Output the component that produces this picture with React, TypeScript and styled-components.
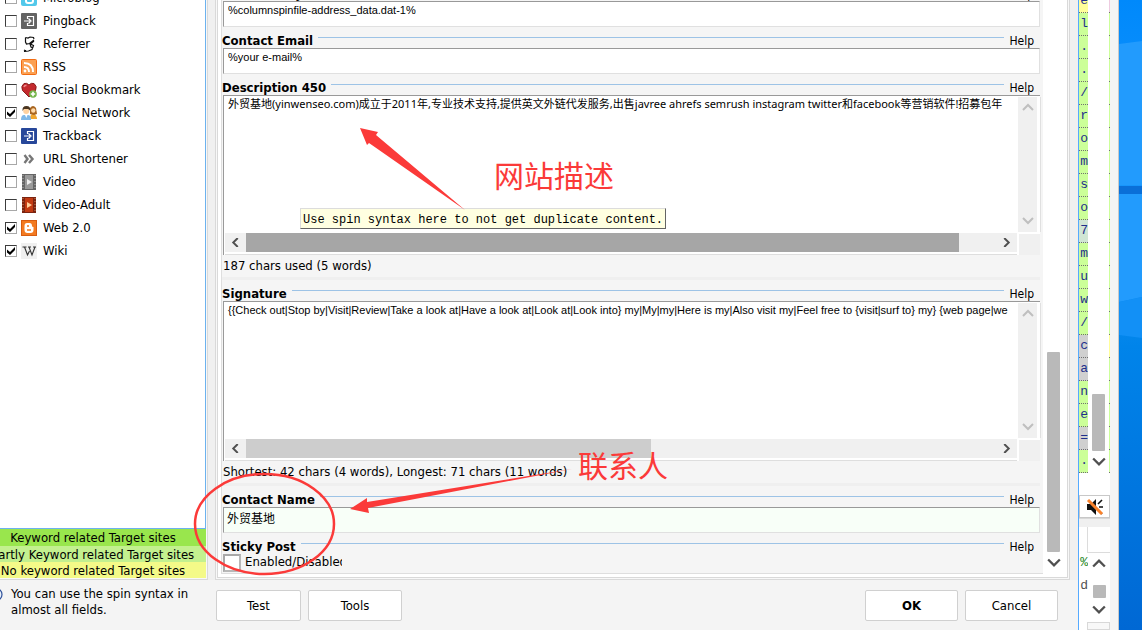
import React from "react";
import styled, { createGlobalStyle } from "styled-components";

const ui = `"DejaVu Sans Condensed", "Noto Sans", "Noto Sans CJK SC", sans-serif`;
const latinField = `"Liberation Sans", "Noto Sans CJK SC", sans-serif`;
const mixedField = `"Noto Sans", "Noto Sans CJK SC", sans-serif`;
const red = "#fb3a39";

const Global = createGlobalStyle`
  *, *::before, *::after { box-sizing: border-box; }
  body { margin: 0; background: #f4f4f4; color: #000; font: 13px/16px ${ui}; overflow: hidden; }
  input, textarea, button { font: inherit; color: inherit; margin: 0; }
`;

const Screen = styled.div`
  position: relative;
  display: flex;
  height: 100vh;
  min-height: 600px;
  overflow: hidden;
`;
const DialogWindow = styled.main`
  flex: 1;
  min-width: 0;
  display: flex;
  flex-direction: column;
  border-right: 1px solid #55aaff;
`;
const Workspace = styled.div`
  flex: 1;
  min-height: 0;
  display: flex;
  gap: 7px;
  background: #f0f0f0;
`;

/* Sidebar */
const Sidebar = styled.aside`
  width: 208px;
  flex: none;
  display: flex;
  flex-direction: column;
  background: #f8f8f8;
  border: solid #d9d9d9;
  border-width: 0 1px 1px 0;
  padding: 0 1px 1px 0;
`;
const SiteList = styled.ul`
  flex: 1;
  min-height: 0;
  margin: 0;
  padding: 0;
  list-style: none;
  overflow: hidden;
  background: #fff;
  border: solid #6cb2ee;
  border-width: 0 1px 1px 0;
`;
const SiteItem = styled.li`
  height: 23px;
  &:first-child { margin-top: -14px; }
`;
const SiteLabel = styled.label`
  display: flex;
  align-items: center;
  height: 23px;
  padding-left: 5px;
  svg { margin: 0 6px 0 4px; flex: none; }
`;
const Tick = styled.input<{ $large?: boolean }>`
  appearance: none;
  flex: none;
  width: ${(p) => (p.$large ? 18 : 12)}px;
  height: ${(p) => (p.$large ? 18 : 12)}px;
  background: #fff;
  border: ${(p) => (p.$large ? "2px" : "1px")} solid;
  border-color: ${(p) => (p.$large ? "#a8a8a8 #b8b8b8 #b8b8b8 #a8a8a8" : "#3c3c3c #a8a8a8 #a8a8a8 #3c3c3c")};
  &:checked::before {
    content: "";
    display: block;
    width: 10px;
    height: 10px;
    background: #000;
    clip-path: polygon(10% 40%, 40% 65%, 90% 15%, 90% 45%, 40% 95%, 10% 70%);
  }
`;
const Legend = styled.div<{ $tone: string }>`
  display: flex;
  justify-content: center;
  height: 16px;
  line-height: 17px;
  padding-right: 20px;
  white-space: nowrap;
  overflow: hidden;
  background: ${(p) => p.$tone};
  &:first-of-type { height: 17px; }
`;

/* Options panel */
const Panel = styled.section`
  flex: 1;
  min-width: 0;
  margin-right: 8px;
  padding: 0 1px 1px;
  background: #f8f8f8;
  border: solid #d9d9d9;
  border-width: 0 1px 1px;
`;
const PanelInner = styled.div`
  display: flex;
  height: 100%;
  padding: 0 0 3px 3px;
  background: #fff;
  border: solid #d9d9d9;
  border-width: 0 1px 1px;
`;
const Form = styled.form`
  flex: 1;
  min-width: 0;
  display: flex;
  flex-direction: column;
  justify-content: flex-end;
  overflow: hidden;
  padding-right: 3px;
  background: #f5f5f5;
  border: solid #dedede;
  border-width: 0 0 1px 1px;
  > * { flex: none; }
`;
const GroupHead = styled.div`
  display: flex;
  align-items: center;
  height: 21px;
  padding: 6px 6px 0 0;
  gap: 5px;
  &::before { content: ""; order: 1; flex: 1; height: 1px; margin-bottom: 6px; background: #9dc3e6; }
`;
const GroupTitle = styled.label`
  font-weight: bold;
  font-size: 13px;
`;
const HelpLink = styled.a`
  order: 2;
  color: #000;
  font-size: 12px;
  text-decoration: none;
`;
const TextInput = styled.input<{ $active?: boolean }>`
  display: block;
  width: 100%;
  height: 26px;
  padding: ${(p) => (p.$active ? "0 3px 6px" : "0 4px 8px")};
  font: ${(p) => (p.$active ? 12 : 11)}px/16px ${latinField};
  outline: 0;
  border: 1px solid;
  border-color: #999 #e0e0e0 #e0e0e0 #999;
  border-radius: 0;
  margin-left: 1px;
  max-width: calc(100% - 1px);
  background: ${(p) => (p.$active ? "#f8fff8" : "#fff")};
`;
const MemoBox = styled.div`
  display: grid;
  grid-template: 136px 23px / 1fr 22px;
  height: 160px;
  margin-left: 1px;
  background: #fff;
  border: solid #999;
  border-width: 1px 0 0 1px;
`;
const Memo = styled.textarea<{ $font: string }>`
  display: block;
  width: 100%;
  height: 100%;
  padding: 0 0 0 4px;
  border: 0;
  outline: 0;
  resize: none;
  overflow: hidden;
  white-space: pre;
  background: #fff;
  font: 11px/16px ${(p) => p.$font};
`;
const MemoView = styled.div`
  padding-right: 3px;
  min-width: 0;
`;
const VBar = styled.div`
  display: flex;
  flex-direction: column;
  justify-content: space-between;
  align-items: center;
  margin: 1px 3px 0 0;
  padding: 4px 0 5px;
  background: #f0f0f0;
  box-shadow: 3px 0 #fff, 4px 0 #e0e0e0;
`;
const HBar = styled.div`
  display: flex;
  align-items: center;
  margin: 1px 1px 3px;
  background: #f0f0f0;
  box-shadow: 0 2px #fff, 0 3px #dedede;
  svg { flex: none; margin: 0 6px; }
`;
const HTrack = styled.div`
  flex: 1;
  height: 100%;
`;
const HThumb = styled.div<{ $tone: string }>`
  height: 100%;
  background: ${(p) => p.$tone};
`;
const Corner = styled.div`
  background: #f0f0f0;
  margin: 2px 0 0 1px;
`;
const Stats = styled.p`
  margin: 0;
  height: 25px;
  padding: 3px 0 0 1px;
  border-bottom: 3px solid #efefef;
`;
const StickyRow = styled.label`
  display: flex;
  align-items: flex-start;
  gap: 4px;
  height: 19px;
  width: 120px;
  padding-left: 1px;
  overflow: hidden;
`;
const PanelScroll = styled.div`
  flex: none;
  width: 24px;
  display: flex;
  flex-direction: column;
  align-items: center;
  justify-content: flex-end;
  gap: 4px;
  padding: 0 3px 4px 0;
`;
const Thumb = styled.div<{ $h: number }>`
  width: 13px;
  height: ${(p) => p.$h}px;
  border-radius: 1px;
  background: #b9b9b9;
`;

/* Footer */
const Footer = styled.footer`
  flex: none;
  display: flex;
  height: 50px;
  padding-right: 20px;
  background: #f4f4f4;
`;
const Tip = styled.div`
  display: flex;
  gap: 8px;
  width: 216px;
  padding-top: 6px;
  p { margin: 0; }
  svg { display: block; flex: none; margin-top: 2px; }
`;
const ButtonRow = styled.div`
  flex: 1;
  display: flex;
  gap: 7px;
  padding-top: 10px;
`;
const PushButton = styled.button<{ $width: number; $main?: boolean }>`
  width: ${(p) => p.$width}px;
  height: 31px;
  padding: 0;
  background: #fff;
  border: 1px solid #d0d0d0;
  border-radius: 2px;
  font-weight: ${(p) => (p.$main ? "bold" : "normal")};
  margin-left: ${(p) => (p.$main ? "auto" : "0")};
`;

/* Window behind the dialog */
const BackWindow = styled.div`
  flex: none;
  width: 40px;
  display: flex;
  background: #f4f4f4;
  border-right: 1px solid #c8c8c8;
`;
const BackContent = styled.div`
  width: 31px;
  display: flex;
  flex-direction: column;
  background: #fff;
`;
const CodeArea = styled.div`
  display: flex;
  flex: none;
  height: 473px;
  overflow: hidden;
`;
const CodeColumn = styled.div<{ $width: number }>`
  width: ${(p) => p.$width}px;
  overflow: hidden;
`;
const CodeCell = styled.div<{ $tone: string }>`
  display: flex;
  justify-content: flex-end;
  height: 23px;
  background: ${(p) => p.$tone};
  border-bottom: 1px dotted #707070;
  font: 13px/22px "Liberation Mono", monospace;
  color: #1f2f8c;
  &:first-child { margin-top: -10px; }
`;
const CodeScroll = styled.div`
  flex: 1;
  display: flex;
  flex-direction: column;
  align-items: center;
  justify-content: flex-end;
  gap: 4px;
  padding-bottom: 4px;
`;
const CodeTail = styled.div`
  height: 22px;
`;
const SoundButton = styled.button`
  display: grid;
  place-items: center;
  width: 31px;
  height: 23px;
  padding: 0;
  background: #fff;
  border: 1px solid #c8c8c8;
`;
const StatusGap = styled.div`
  height: 9px;
  background: #f0f0f0;
  border-top: 1px solid #d8d8d8;
`;
const SmallGrid = styled.div`
  height: 26px;
  margin-left: 8px;
  border: solid #dcdcdc;
  border-width: 0 0 1px 1px;
`;
const LowerArea = styled.div`
  display: flex;
  height: 69px;
`;
const LowerText = styled.div<{ $tone: string }>`
  height: 23px;
  width: 9px;
  display: flex;
  justify-content: flex-end;
  overflow: hidden;
  font: 13px/20px "Liberation Mono", monospace;
  color: ${(p) => p.$tone};
`;
const LowerScroll = styled.div`
  flex: 1;
  display: flex;
  flex-direction: column;
  align-items: center;
  gap: 5px;
  padding: 3px 0 0;
  svg:first-child { margin-bottom: 10px; }
`;
const LowerBox = styled.div`
  flex: 1;
  margin-left: 8px;
  background: #f8f8f8;
  border: 1px solid #d8d8d8;
`;
const Desktop = styled.div`
  flex: none;
  width: 23px;
  background: #0078e4;
  svg { display: block; width: 100%; height: 100%; }
`;

/* Overlays */
const Tooltip = styled.div`
  position: absolute;
  left: 300px;
  top: 208px;
  height: 21px;
  padding: 3px 2px;
  background: #ffffe1;
  border: 1px solid;
  border-color: #dcdcdc #646464 #646464 #dcdcdc;
  font: 12px/16px "Liberation Mono", monospace;
  white-space: nowrap;
`;
const Marks = styled.svg`
  position: absolute;
  left: 0;
  top: 0;
  pointer-events: none;
`;
const MarkText = styled.div<{ $x: number; $y: number }>`
  position: absolute;
  left: ${(p) => p.$x}px;
  top: ${(p) => p.$y}px;
  font: 30px/36px "Noto Sans CJK SC", sans-serif;
  color: ${red};
  white-space: nowrap;
`;

const Chevron = ({ dir, color = "#505050", size = 14 }: { dir: "up" | "down" | "left" | "right"; color?: string; size?: number }) => {
  const d = { up: "M1 9l5-5 5 5", down: "M1 3l5 5 5-5", left: "M9 0L3 6l6 6", right: "M3 0l6 6-6 6" }[dir];
  return (
    <svg width={size} height={size} viewBox="0 0 12 12" fill="none" stroke={color} strokeWidth={size < 12 ? 2.6 : 2}>
      <path d={d} />
    </svg>
  );
};

const Film = ({ base, frame, arrow }: { base: string; frame: string; arrow: string }) => (
  <>
    <path d="M1 0h14v16H1z" fill={frame} />
    <path d="M4 1h8v14H4z" fill={base} />
    <path d="M2 1v15M14 1v15" stroke={arrow} strokeWidth="1" strokeDasharray="1 2" opacity=".6" />
    <path d="M6 5l5 3-5 3z" fill={arrow} />
  </>
);
const DoorArrow = ({ tone }: { tone: string }) => (
  <>
    <rect width="16" height="16" rx="1" fill={tone} />
    <path d="M6.500 6V3.500h6v9h-6V10M3 8h6M7.500 5.500L10 8l-2.500 2.500" fill="none" stroke="#fff" strokeWidth="1.200" />
  </>
);

const icons: Record<string, React.ReactNode> = {
  Microblog: (
    <>
      <rect width="16" height="16" rx="2" fill="#52c8ea" />
      <path d="M5 5v6q0 2 2 2h3q2 0 2-2V9H5" fill="none" stroke="#fff" strokeWidth="2" />
    </>
  ),
  Pingback: <DoorArrow tone="#636363" />,
  Referrer: (
    <path d="M4.500 1.500L4.500 6l1 2 3-.5L13 4M4.500 1.500L7 2l2-1 3.500.5L13 3M13 5L9.500 8l3 1.500L11 13.500 7.500 15 3 15.500M9 8l1 3 2 1M3 14l2 1" fill="none" stroke="#111" strokeWidth="1.200" />
  ),
  RSS: (
    <>
      <rect x=".5" y=".5" width="15" height="15" rx="1" fill="#fba052" stroke="#f26c12" />
      <path d="M3 8q5 0 5 5M3 4q9 0 9 9" fill="none" stroke="#fff" strokeWidth="2" />
      <circle cx="4" cy="12" r="1.400" fill="#fff" />
    </>
  ),
  "Social Bookmark": (
    <>
      <path d="M8 15L1.500 8.500Q-.5 4 3 1.500 6 .5 8 3q2-2.500 5-1.500Q16.500 4 14.500 8.500z" fill="#c42a2e" stroke="#8a1d1d" />
      <path d="M3 5q.5-2 2.500-1.500" fill="none" stroke="#ee8d8d" strokeWidth="1.500" />
      <circle cx="12" cy="12" r="3.800" fill="#74b54a" />
      <path d="M12 9.800v4.400M9.800 12h4.400" stroke="#fff" strokeWidth="1.600" />
    </>
  ),
  "Social Network": (
    <>
      <path d="M9 14q0-5 3-5t4 4v1z" fill="#f0a52e" />
      <path d="M9 9V3q3-4 6 0l1 6-3 1z" fill="#a8641e" />
      <circle cx="12.300" cy="5.500" r="2.200" fill="#ffd9a8" />
      <path d="M0 15q0-5 3-5h4q3 0 3 5z" fill="#7fb8e8" />
      <path d="M4 10h2.500L5.300 13z" fill="#fff" />
      <circle cx="5.200" cy="6" r="3" fill="#ffd2a0" />
      <path d="M1.500 6Q1 1 5.500 1T9 5.500L7 4 3 4z" fill="#4a3520" />
    </>
  ),
  Trackback: <DoorArrow tone="#27479a" />,
  "URL Shortener": <path d="M3.500 4l3 4-3 4M8 4l3.500 4L8 12" fill="none" stroke="#777" strokeWidth="2.400" />,
  Video: <Film base="#9a9a9a" frame="#666" arrow="#f0f0f0" />,
  "Video-Adult": <Film base="#c23a12" frame="#7c2410" arrow="#ffcf9a" />,
  "Web 2.0": (
    <>
      <rect x=".5" y=".5" width="15" height="15" fill="#f37a20" stroke="#d85d10" />
      <path d="M6 3h2.500Q11 3 11 6q0 1 1.500 1v3q0 3-3 3H6.500q-3 0-3-3V6q0-3 2.500-3z" fill="#fff" />
      <path d="M6 6h2M6 10h4" stroke="#f37a20" strokeWidth="1.300" />
    </>
  ),
  Wiki: (
    <>
      <rect width="16" height="16" fill="#f0f0f0" />
      <path d="M1.500 4h4M7 4h3M12 4h3M3.500 4L6.500 12 8.500 8M8 4l3 8 3-8" fill="none" stroke="#333" strokeWidth="1.100" />
    </>
  ),
};
const ticked = ["Social Network", "Web 2.0", "Wiki"];

const green = "#ccff99";
const grey = "#d0d0d0";
const codeRows: [string, string, string][] = [
  ["e", "#ffff99", "#eecbe0"], ["l", green, green], [".", green, green], [".", green, green], ["/", green, green],
  ["r", green, green], ["o", green, green], ["m", green, green], ["s", green, green], ["o", green, green],
  ["7", "#d0e6d4", green], ["m", green, green], ["u", green, green], ["w", green, green], ["/", green, green],
  ["c", grey, "#ffff99"], ["a", grey, green], ["n", green, green], ["e", green, green], ["=", grey, green], [".", green, green],
];

const Head = ({ title, id }: { title: string; id: string }) => (
  <GroupHead>
    <GroupTitle htmlFor={id}>{title}</GroupTitle>
    <HelpLink href="#help">Help</HelpLink>
  </GroupHead>
);

const MemoField = ({ id, text, portion, tone, font }: { id: string; text: string; portion: number; tone: string; font: string }) => (
  <MemoBox>
    <MemoView>
      <Memo id={id} $font={font} wrap="off" spellCheck={false} defaultValue={text} />
    </MemoView>
    <VBar>
      <Chevron dir="up" size={12} color="#bfbfbf" />
      <Chevron dir="down" size={12} color="#bfbfbf" />
    </VBar>
    <HBar>
      <Chevron dir="left" size={9} />
      <HTrack>
        <HThumb $tone={tone} style={{ width: `${portion}%` }} />
      </HTrack>
      <Chevron dir="right" size={9} />
    </HBar>
    <Corner />
  </MemoBox>
);

export default function App() {
  return (
    <Screen>
      <Global />
      <DialogWindow>
        <Workspace>
          <Sidebar>
            <SiteList>
              {Object.keys(icons).map((name) => (
                <SiteItem key={name}>
                  <SiteLabel>
                    <Tick type="checkbox" defaultChecked={ticked.includes(name)} />
                    <svg width="16" height="16" viewBox="0 0 16 16">{icons[name]}</svg>
                    {name}
                  </SiteLabel>
                </SiteItem>
              ))}
            </SiteList>
            <Legend $tone="#99e64d">Keyword related Target sites</Legend>
            <Legend $tone="#c3f08f">Partly Keyword related Target sites</Legend>
            <Legend $tone="#f4fa88">No keyword related Target sites</Legend>
          </Sidebar>
          <Panel>
            <PanelInner>
              <Form onSubmit={(e) => e.preventDefault()}>
                <Head title="Contact City" id="city" />
                <TextInput id="city" defaultValue="%columnspinfile-address_data.dat-1%" />
                <Head title="Contact Email" id="email" />
                <TextInput id="email" defaultValue="%your e-mail%" />
                <Head title="Description 450" id="description" />
                <MemoField
                  id="description"
                  portion={95}
                  tone="#a6a6a6"
                  font={mixedField}
                  text="外贸基地(yinwenseo.com)成立于2011年,专业技术支持,提供英文外链代发服务,出售javree ahrefs semrush instagram twitter和facebook等营销软件!招募包年"
                />
                <Stats>187 chars used (5 words)</Stats>
                <Head title="Signature" id="signature" />
                <MemoField
                  id="signature"
                  portion={54}
                  tone="#cdcdcd"
                  font={latinField}
                  text="{{Check out|Stop by|Visit|Review|Take a look at|Have a look at|Look at|Look into} my|My|my|Here is my|Also visit my|Feel free to {visit|surf to} my} {web page|we"
                />
                <Stats>Shortest: 42 chars (4 words), Longest: 71 chars (11 words)</Stats>
                <Head title="Contact Name" id="name" />
                <TextInput id="name" $active defaultValue="外贸基地" />
                <Head title="Sticky Post" id="sticky" />
                <StickyRow>
                  <Tick $large id="sticky" type="checkbox" />
                  Enabled/Disabled
                </StickyRow>
              </Form>
              <PanelScroll>
                <Thumb $h={200} />
                <Chevron dir="down" />
              </PanelScroll>
            </PanelInner>
          </Panel>
        </Workspace>
        <Footer>
          <Tip>
            <svg width="3" height="13" viewBox="0 0 3 13">
              <circle cx="-4" cy="6.500" r="6" fill="#e8f0fa" stroke="#2c4f9a" strokeWidth="1.200" />
            </svg>
            <p>
              You can use the spin syntax in
              <br />
              almost all fields.
            </p>
          </Tip>
          <ButtonRow>
            <PushButton $width={85}>Test</PushButton>
            <PushButton $width={94}>Tools</PushButton>
            <PushButton $width={93} $main>OK</PushButton>
            <PushButton $width={93}>Cancel</PushButton>
          </ButtonRow>
        </Footer>
      </DialogWindow>
      <BackWindow>
        <BackContent>
          <CodeArea>
            <CodeColumn $width={9}>
              {codeRows.map(([text, tone], i) => (
                <CodeCell key={i} $tone={tone}>{text}</CodeCell>
              ))}
            </CodeColumn>
            <CodeScroll>
              <Thumb $h={57} />
              <Chevron dir="down" />
            </CodeScroll>
            <CodeColumn $width={1}>
              {codeRows.map(([, , tone], i) => (
                <CodeCell key={i} $tone={tone} />
              ))}
            </CodeColumn>
          </CodeArea>
          <CodeTail />
          <SoundButton aria-label="Mute">
            <svg width="18" height="18" viewBox="0 0 18 18">
              <path d="M1 6h4l5-5v16l-5-5H1z" fill="#111" />
              <path d="M12 6l4-4M13 9h4M12 12l4 4" stroke="#111" strokeWidth="1.600" />
              <path d="M2 2l14 14" stroke="#f9812a" strokeWidth="3" />
            </svg>
          </SoundButton>
          <StatusGap />
          <SmallGrid />
          <LowerArea>
            <div>
              <LowerText $tone="#1d861d">%</LowerText>
              <LowerText $tone="#505050">d</LowerText>
            </div>
            <LowerScroll>
              <Chevron dir="up" />
              <Thumb $h={13} />
              <Chevron dir="down" />
            </LowerScroll>
          </LowerArea>
          <LowerBox />
        </BackContent>
      </BackWindow>
      <Desktop>
        <svg viewBox="0 0 23 630" preserveAspectRatio="none">
          <defs>
            <linearGradient id="sky" x1="0" y1="0" x2="0" y2="1">
              <stop offset="0" stopColor="#0089fb" />
              <stop offset=".35" stopColor="#1c97fb" />
              <stop offset=".55" stopColor="#0084ea" />
              <stop offset="1" stopColor="#0068d4" />
            </linearGradient>
          </defs>
          <path d="M0 0h23v630H0z" fill="url(#sky)" />
          <path d="M0 44l23-3v144H0zM0 194h23v103L0 302z" fill="#229bfd" />
          <path d="M0 186h23v8H0z" fill="#0a6fd8" />
          <path d="M0 302l23-5v41L0 335z" fill="#1290f6" />
        </svg>
      </Desktop>
      <Tooltip role="tooltip">Use spin syntax here to not get duplicate content.</Tooltip>
      <Marks width="700" height="600" viewBox="0 0 700 600">
        <path d="M360 128l18 4-2 3 89 75-96-67-2 2z" fill={red} />
        <path d="M350 509l17-11v4l205-33-204 39 1 5z" fill={red} />
        <ellipse cx="264.500" cy="524" rx="69.500" ry="50" fill="none" stroke={red} strokeWidth="2.500" />
      </Marks>
      <MarkText $x={494} $y={156}>网站描述</MarkText>
      <MarkText $x={578} $y={446}>联系人</MarkText>
    </Screen>
  );
}
